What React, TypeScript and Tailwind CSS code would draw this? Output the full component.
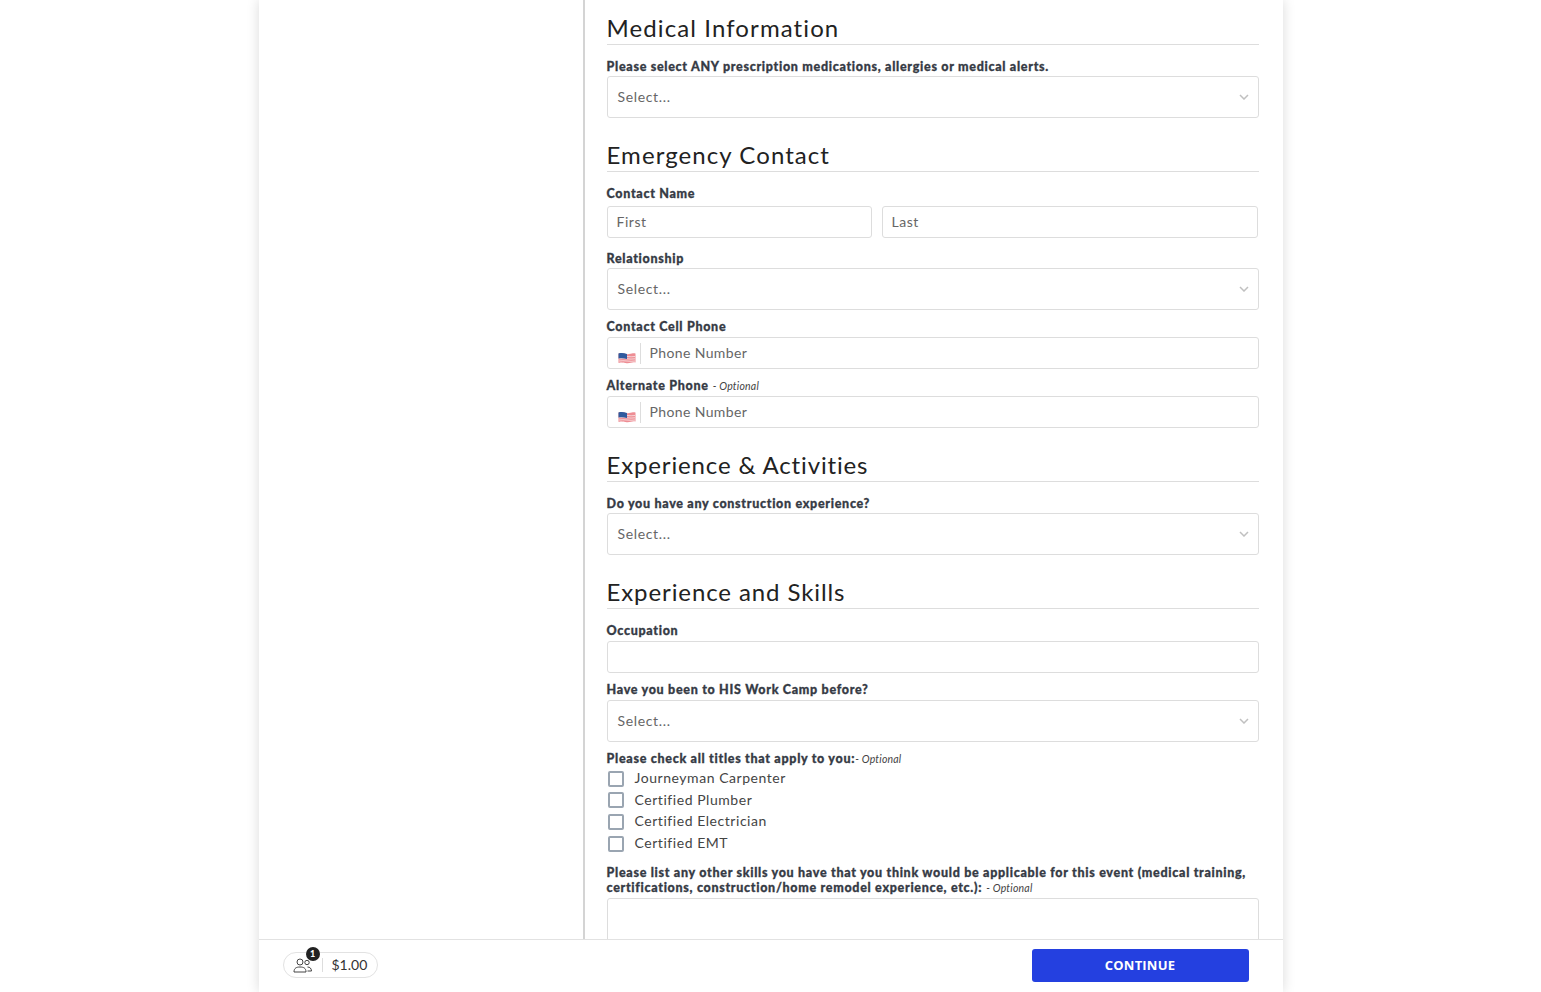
import React from "react";

const font = { fontFamily: '"Lato", "Open Sans", sans-serif' };
const buttonFont = { fontFamily: '"Open Sans", sans-serif' };

function Heading({ children, className = "" }: { children: React.ReactNode; className?: string }) {
  return (
    <h2 className={`h-[29px] border-b border-[#dddddd] text-[24px] leading-[23px] text-[#222222] ${className}`}>
      {children}
    </h2>
  );
}

function Label({ children, optional, tight, className = "" }: { children: React.ReactNode; optional?: boolean; tight?: boolean; className?: string }) {
  return (
    <div className={`translate-y-px text-[12.5px] leading-[15px] font-black tracking-[0.7px] text-[#363b45] [-webkit-text-stroke:0.3px_#363b45] ${className}`}>
      {children}
      {optional && <span className={`${tight ? "ml-0" : "ml-1"} text-[10.5px] leading-none font-normal italic tracking-[0.2px] text-[#444444] [-webkit-text-stroke:0px]`}>- Optional</span>}
    </div>
  );
}

function Select() {
  return (
    <div className="flex h-[42px] items-center justify-between rounded-[3px] border border-[#dddddd] pr-[9px] pl-[10px] text-[14px] tracking-[0.65px] text-[#666666]">
      <span className="-mt-[2px]">Select...</span>
      <svg width="10" height="6" viewBox="0 0 10 6" fill="none" stroke="#c0c0c0" strokeWidth="1.5">
        <path d="M1 1l4 4 4-4" />
      </svg>
    </div>
  );
}

function Flag() {
  return (
    <svg width="18" height="12" viewBox="0 0 18 12" className="mt-[9px] shrink-0">
      <path d="M0.500 1.500C5 0 7 3 11 2s5-1 6.500-.5V10.500C14 9.500 12 12 7.500 11S2 10.500 0.500 11z" fill="#ee8d94" />
      <path d="M1 4.500c5-1 11 1 16 0M1 6.800c5-1 11 1 16 0M1 9c5-1 11 1 16 0" stroke="#f7dfe0" strokeWidth="0.9" fill="none" />
      <path d="M0.500 1.500C3 .8 6 1 9 2v5C6 6 3 5.900 0.500 6.500z" fill="#2f5a9e" />
    </svg>
  );
}

function Phone() {
  return (
    <div className="flex h-[32px] items-center rounded-[3px] border border-[#dddddd] pl-[10px] text-[14px] tracking-[0.38px] text-[#666666]">
      <Flag />
      <span className="ml-[4px] h-[21px] w-px bg-[#dddddd]" />
      <span className="-mt-[2px] ml-[9px]">Phone Number</span>
    </div>
  );
}

function Check({ children }: { children: React.ReactNode }) {
  return (
    <div className="flex h-[21.6px] items-center text-[14px] tracking-[0.55px] text-[#444444]">
      <span className="ml-px h-[16px] w-[16px] rounded-[2px] border-2 border-[#9aa5b1]" />
      <span className="-mt-[2px] ml-[11px]">{children}</span>
    </div>
  );
}

export default function App() {
  return (
    <div className="flex h-[992px] justify-center overflow-hidden bg-white" style={font}>
      <div className="flex h-full w-[1024px] flex-col shadow-[0_0_12px_rgba(0,0,0,0.15)]">
        <div className="flex min-h-0 flex-1 overflow-hidden">
          <div className="w-[326px] shrink-0 border-r-2 border-[#d4d4d4]" />
          <div className="min-w-0 flex-1 overflow-hidden pt-[16px] pr-[24px] pl-[22px]">
            <Heading className="tracking-[1.1px]">Medical Information</Heading>
            <Label className="mt-[13px]">Please select ANY prescription medications, allergies or medical alerts.</Label>
            <div className="mt-[3px]"><Select /></div>

            <Heading className="mt-[25px] tracking-[1.07px]">Emergency Contact</Heading>
            <Label className="mt-[13px]">Contact Name</Label>
            <div className="mt-[6px] flex gap-[10px] pr-px text-[14px] tracking-[0.55px] text-[#666666]">
              <div className="flex h-[32px] w-[265px] items-center rounded-[3px] border border-[#dddddd] pb-[2px] pl-[9px]">First</div>
              <div className="flex h-[32px] flex-1 items-center rounded-[3px] border border-[#dddddd] pb-[2px] pl-[9px]">Last</div>
            </div>
            <Label className="mt-[12px]">Relationship</Label>
            <div className="mt-[3px]"><Select /></div>
            <Label className="mt-[8px]">Contact Cell Phone</Label>
            <div className="mt-[4px]"><Phone /></div>
            <Label optional className="mt-[8px]">Alternate Phone</Label>
            <div className="mt-[4px]"><Phone /></div>

            <Heading className="mt-[25px] tracking-[0.85px]">Experience &amp; Activities</Heading>
            <Label className="mt-[13px]">Do you have any construction experience?</Label>
            <div className="mt-[3px]"><Select /></div>

            <Heading className="mt-[25px] tracking-[0.9px]">Experience and Skills</Heading>
            <Label className="mt-[13px]">Occupation</Label>
            <div className="mt-[4px] h-[32px] rounded-[3px] border border-[#dddddd]" />
            <Label className="mt-[8px]">Have you been to HIS Work Camp before?</Label>
            <div className="mt-[4px]"><Select /></div>
            <Label optional tight className="mt-[8px]">Please check all titles that apply to you:</Label>
            <div className="mt-[3px]">
              <Check>Journeyman Carpenter</Check>
              <Check>Certified Plumber</Check>
              <Check>Certified Electrician</Check>
              <Check>Certified EMT</Check>
            </div>
            <Label optional className="mt-[10px]">
              Please list any other skills you have that you think would be applicable for this event (medical training, certifications, construction/home remodel experience, etc.):
            </Label>
            <div className="mt-[3.6px] h-[80px] rounded-[3px] border border-[#dddddd]" />
          </div>
        </div>
        <div className="flex h-[53px] shrink-0 items-center justify-between border-t border-[#e2e2e2] bg-white pr-[34px] pb-[2px] pl-[24px]">
          <div className="flex h-[26px] w-[95px] items-center rounded-full border border-[#e2e2e2] pl-[9px] text-[14px] text-[#333333]">
            <div className="relative flex h-[16px] w-[21px] items-center">
              <svg width="19" height="15" viewBox="0 0 19 15" fill="none" stroke="#444444" strokeWidth="1">
                <circle cx="7" cy="4" r="3" />
                <path d="M1 14c0-4 2.500-5 6-5s6 1 6 5z" />
                <circle cx="14" cy="4.500" r="2.200" />
                <path d="M14.500 9c2.500 0 3.800 1.400 4 4h-4" />
              </svg>
              <span className="absolute top-[-10px] left-[13px] flex h-[14px] w-[14px] items-center justify-center rounded-full bg-[#222222] text-[9px] font-black text-white">1</span>
            </div>
            <span className="ml-[8px] h-[14px] w-px bg-[#dddddd]" />
            <span className="-mt-[1px] ml-[9px]">$1.00</span>
          </div>
          <button style={buttonFont} className="h-[33px] w-[217px] rounded-[3px] bg-[#2440e0] pt-px text-[13px] font-bold tracking-[0.2px] text-white">CONTINUE</button>
        </div>
      </div>
    </div>
  );
}
